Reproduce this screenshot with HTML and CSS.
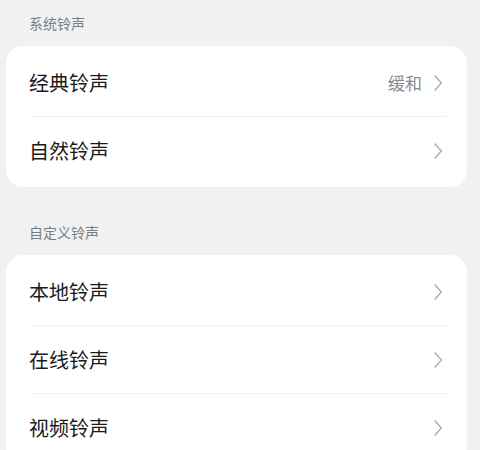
FILE: index.html
```html
<!DOCTYPE html>
<html lang="zh-CN">
<head>
    <meta charset="UTF-8">
    <meta name="viewport" content="width=device-width, initial-scale=1.0">
    <title>铃声</title>
    <link rel="stylesheet" href="styles.css">
</head>
<body>
    <div class="page">
        <p class="group-title">系统铃声</p>
        <div class="card">
            <div class="row">
                <span class="row-name">经典铃声</span>
                <span class="row-value">缓和</span>
                <svg class="arrow" viewBox="0 0 12 22"><path d="M2 2 L10 11 L2 20" /></svg>
            </div>
            <div class="line"></div>
            <div class="row">
                <span class="row-name">自然铃声</span>
                <svg class="arrow" viewBox="0 0 12 22"><path d="M2 2 L10 11 L2 20" /></svg>
            </div>
        </div>

        <p class="group-title second">自定义铃声</p>
        <div class="card">
            <div class="row">
                <span class="row-name">本地铃声</span>
                <svg class="arrow" viewBox="0 0 12 22"><path d="M2 2 L10 11 L2 20" /></svg>
            </div>
            <div class="line"></div>
            <div class="row">
                <span class="row-name">在线铃声</span>
                <svg class="arrow" viewBox="0 0 12 22"><path d="M2 2 L10 11 L2 20" /></svg>
            </div>
            <div class="line"></div>
            <div class="row">
                <span class="row-name">视频铃声</span>
                <svg class="arrow" viewBox="0 0 12 22"><path d="M2 2 L10 11 L2 20" /></svg>
            </div>
        </div>
    </div>
</body>
</html>
```

FILE: styles.css
```css
body {
    margin: 0;
    background-color: #f0f1f3;
    font-family: "Noto Sans CJK SC", "Noto Sans", sans-serif;
}

.page {
    padding: 0 13px 0 6px;
}

.group-title {
    margin: 0;
    height: 46px;
    line-height: 46px;
    padding-left: 23px;
    font-size: 14px;
    color: #7d7d7d;
}

.group-title.second {
    margin-top: 22px;
}

.card {
    background-color: white;
    border-radius: 17px;
    padding: 3px 0;
    overflow: hidden;
}

.row {
    display: flex;
    align-items: center;
    height: 67px;
    padding: 0 24px 0 23px;
}

.row-name {
    flex: 1;
    font-size: 20px;
    color: #1a1a1a;
}

.row-value {
    font-size: 17px;
    color: #8a8a8a;
    margin-right: 11px;
}

.arrow {
    width: 10px;
    height: 20px;
}

.arrow path {
    fill: none;
    stroke: #b0b0b0;
    stroke-width: 1.8;
}

.line {
    height: 1px;
    background-color: #f1f1f1;
    margin: 0 20px 0 23px;
}
```
